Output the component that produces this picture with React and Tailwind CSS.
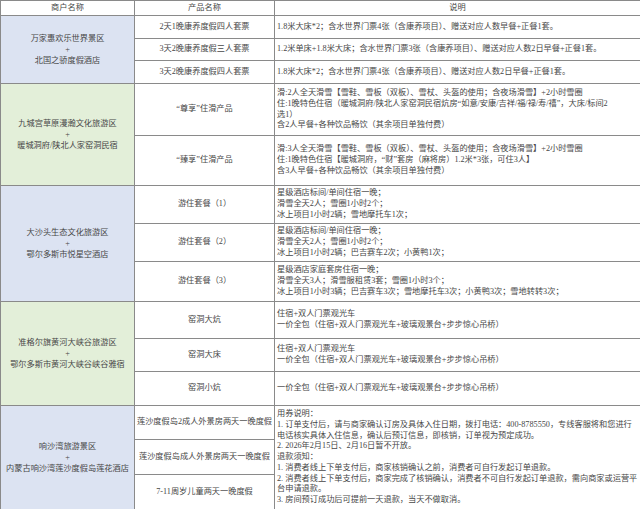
const BLUE = 'bg-[#dce3f2]';
const GREEN = 'bg-[#e3efd9]';

const groups = [
  {
    bg: BLUE,
    merchant: ['万家惠欢乐世界景区', '北国之骄度假酒店'],
    rows: [
      { h: 'h-[23px]', name: '2天1晚康养度假四人套票', desc: ['1.8米大床*2；含水世界门票4张（含康养项目）、赠送对应人数早餐+正餐1套。'] },
      { h: 'h-[22px]', name: '3天2晚康养度假三人套票', desc: ['1.2米单床+1.8米大床；含水世界门票3张（含康养项目）、赠送对应人数2日早餐+正餐1套。'] },
      { h: 'h-[23px]', name: '3天2晚康养度假四人套票', desc: ['1.8米大床*2；含水世界门票4张（含康养项目）、赠送对应人数2日早餐+正餐1套。'] },
    ],
  },
  {
    bg: GREEN,
    merchant: ['九城宫草原漫瀚文化旅游区', '暖城洞府/陕北人家窑洞民宿'],
    rows: [
      {
        h: 'h-[52px]',
        name: '“尊享”住滑产品',
        desc: [
          '滑:2人全天滑雪【雪鞋、雪板（双板）、雪杖、头盔的使用；含夜场滑雪】+2小时雪圈',
          // the source wraps this line after 标间2
          '住:1晚特色住宿（暖城洞府/陕北人家窑洞民宿炕房“如意/安康/吉祥/福/禄/寿/禧”，大床/标间2',
          '选1）',
          '含2人早餐+各种饮品畅饮（其余项目单独付费）',
        ],
      },
      {
        h: 'h-[50px]',
        name: '“臻享”住滑产品',
        desc: [
          '滑:3人全天滑雪【雪鞋、雪板（双板）、雪杖、头盔的使用；含夜场滑雪】+2小时雪圈',
          '住:1晚特色住宿【暖城洞府，“财”套房（麻将房）1.2米*3张，可住3人】',
          '含3人早餐+各种饮品畅饮（其余项目单独付费）',
        ],
      },
    ],
  },
  {
    bg: BLUE,
    merchant: ['大沙头生态文化旅游区', '鄂尔多斯市悦星空酒店'],
    rows: [
      { h: 'h-[38px]', name: '游住套餐（1）', desc: ['星级酒店标间/单间住宿一晚；', '滑雪全天2人；雪圈1小时2个；', '冰上项目1小时2辆；雪地摩托车1次；'] },
      { h: 'h-[38px]', name: '游住套餐（2）', desc: ['星级酒店标间/单间住宿一晚；', '滑雪全天2人；雪圈1小时2个；', '冰上项目1小时2辆；巴吉赛车2次；小黄鸭1次；'] },
      { h: 'h-[40px]', name: '游住套餐（3）', desc: ['星级酒店家庭套房住宿一晚；', '滑雪全天3人；滑雪服租赁3套；雪圈1小时3个；', '冰上项目1小时3辆；巴吉赛车3次；雪地摩托车3次；小黄鸭3次；雪地转转3次；'] },
    ],
  },
  {
    bg: GREEN,
    merchant: ['准格尔旗黄河大峡谷旅游区', '鄂尔多斯市黄河大峡谷峡谷雅宿'],
    rows: [
      { h: 'h-[37px]', name: '窑洞大炕', desc: ['住宿+双人门票观光车', '一价全包（住宿+双人门票观光车+玻璃观景台+步步惊心吊桥）'] },
      { h: 'h-[33px]', name: '窑洞大床', desc: ['住宿+双人门票观光车', '一价全包（住宿+双人门票观光车+玻璃观景台+步步惊心吊桥）'] },
      { h: 'h-[34px]', name: '窑洞小炕', desc: ['一价全包（住宿+双人门票观光车+玻璃观景台+步步惊心吊桥）'] },
    ],
  },
];

const lastNotes = [
  '用券说明：',
  '1. 订单支付后，请与商家确认订房及具体入住日期，拨打电话：400-8785550，专线客服将和您进行电话核实具体入住信息，确认后预订信息，即核销，订单视为预定成功。',
  '2. 2026年2月15日、2月16日暂不开放。',
  '退款须知：',
  '1. 消费者线上下单支付后，商家核销确认之前，消费者可自行发起订单退款。',
  '2. 消费者线上下单支付后，商家完成了核销确认，消费者不可自行发起订单退款，需向商家或运营平台申请退款。',
  '3. 房间预订成功后可提前一天退款，当天不做取消。',
];

const cell = 'border border-[#8a8a8a] p-0';

const Merchant = ({ bg, names, span }) => (
  <td rowSpan={span} className={`${cell} ${bg} text-center align-middle leading-[11px]`}>
    <div>{names[0]}</div>
    <div>+</div>
    <div>{names[1]}</div>
  </td>
);

const Desc = ({ lines }) => (
  <td className={`${cell} px-[2px] align-middle leading-[10.7px]`}>
    {lines.map((l, i) => (
      <div key={i}>{l}</div>
    ))}
  </td>
);

export default function App() {
  return (
    <div className="w-[640px] h-[509px] overflow-hidden bg-white">
      <table
        className="w-[640px] table-fixed border-collapse text-[8.2px] text-[#474747]"
        style={{ fontFamily: "'Liberation Serif', 'Noto Sans CJK SC', serif" }}
      >
        <colgroup>
          <col className="w-[134px]" />
          <col className="w-[140px]" />
          <col className="w-[366px]" />
        </colgroup>
        <tbody>
          <tr className="h-[15px]">
            <td className={`${cell} text-center`}>商户名称</td>
            <td className={`${cell} text-center`}>产品名称</td>
            <td className={`${cell} text-center`}>说明</td>
          </tr>

          {groups.map((g, gi) =>
            g.rows.map((r, ri) => (
              <tr key={`${gi}-${ri}`} className={r.h}>
                {ri === 0 && <Merchant bg={g.bg} names={g.merchant} span={g.rows.length} />}
                <td className={`${cell} text-center align-middle`}>{r.name}</td>
                <Desc lines={r.desc} />
              </tr>
            ))
          )}

          {/* 响沙湾: notes cell spans all three products */}
          <tr className="h-[34px]">
            <Merchant bg={BLUE} names={['响沙湾旅游景区', '内蒙古响沙湾莲沙度假岛莲花酒店']} span={3} />
            <td className={`${cell} text-center align-middle`}>莲沙度假岛2成人外景房两天一晚度假</td>
            <td rowSpan={3} className={`${cell} px-[2px] align-middle leading-[10.7px]`}>
              {lastNotes.map((l, i) => (
                <div key={i}>{l}</div>
              ))}
            </td>
          </tr>
          <tr className="h-[35px]">
            <td className={`${cell} text-center align-middle`}>莲沙度假岛成人外景房两天一晚度假</td>
          </tr>
          <tr className="h-[35px]">
            <td className={`${cell} text-center align-middle`}>7-11周岁儿童两天一晚度假</td>
          </tr>
        </tbody>
      </table>
    </div>
  );
}
